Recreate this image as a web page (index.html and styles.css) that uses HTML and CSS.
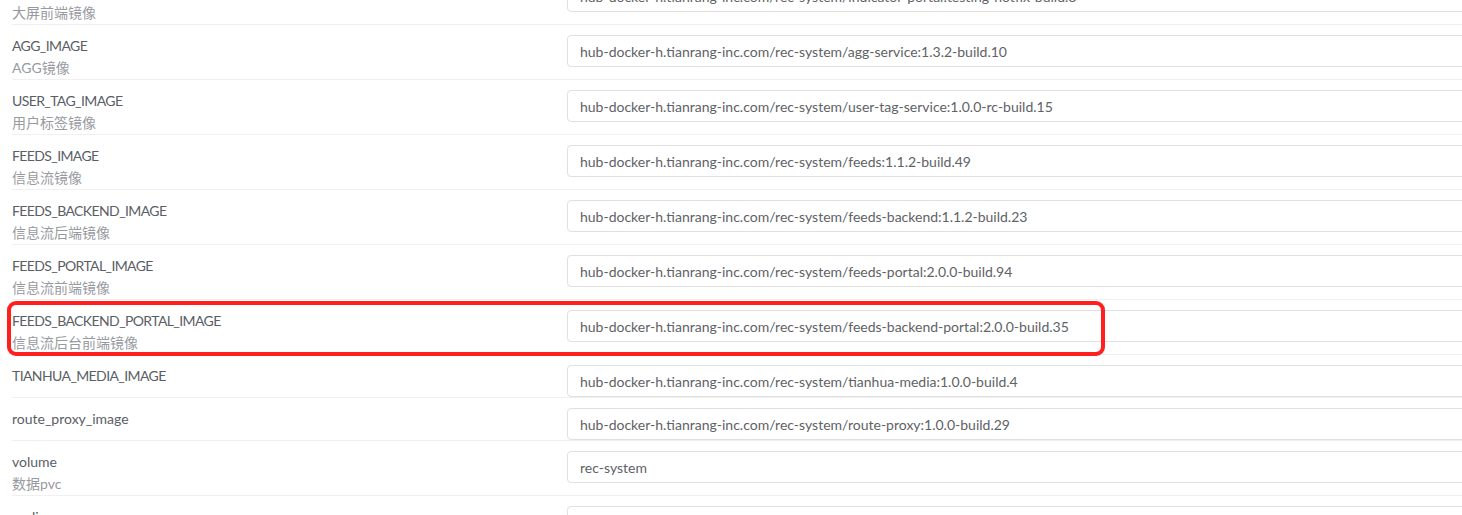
FILE: index.html
```html
<!DOCTYPE html>
<html lang="zh-CN">
<head>
<meta charset="utf-8">
<title>镜像配置</title>
<link rel="stylesheet" href="styles.css">
</head>
<body>
<div class="form">
  <div class="row">
    <div class="label"><div class="name caps">INDICATOR_PORTAL_IMAGE</div><div class="desc">大屏前端镜像</div></div>
    <div class="field"><input class="input" type="text" value="hub-docker-h.tianrang-inc.com/rec-system/indicator-portal:testing-hotfix-build.8"></div>
  </div>
  <div class="row">
    <div class="label"><div class="name caps">AGG_IMAGE</div><div class="desc">AGG镜像</div></div>
    <div class="field"><input class="input" type="text" value="hub-docker-h.tianrang-inc.com/rec-system/agg-service:1.3.2-build.10"></div>
  </div>
  <div class="row">
    <div class="label"><div class="name caps">USER_TAG_IMAGE</div><div class="desc">用户标签镜像</div></div>
    <div class="field"><input class="input" type="text" value="hub-docker-h.tianrang-inc.com/rec-system/user-tag-service:1.0.0-rc-build.15"></div>
  </div>
  <div class="row">
    <div class="label"><div class="name caps">FEEDS_IMAGE</div><div class="desc">信息流镜像</div></div>
    <div class="field"><input class="input" type="text" value="hub-docker-h.tianrang-inc.com/rec-system/feeds:1.1.2-build.49"></div>
  </div>
  <div class="row">
    <div class="label"><div class="name caps">FEEDS_BACKEND_IMAGE</div><div class="desc">信息流后端镜像</div></div>
    <div class="field"><input class="input" type="text" value="hub-docker-h.tianrang-inc.com/rec-system/feeds-backend:1.1.2-build.23"></div>
  </div>
  <div class="row">
    <div class="label"><div class="name caps">FEEDS_PORTAL_IMAGE</div><div class="desc">信息流前端镜像</div></div>
    <div class="field"><input class="input" type="text" value="hub-docker-h.tianrang-inc.com/rec-system/feeds-portal:2.0.0-build.94"></div>
  </div>
  <div class="row highlighted">
    <div class="label"><div class="name caps">FEEDS_BACKEND_PORTAL_IMAGE</div><div class="desc">信息流后台前端镜像</div></div>
    <div class="field"><input class="input" type="text" value="hub-docker-h.tianrang-inc.com/rec-system/feeds-backend-portal:2.0.0-build.35"></div>
    <div class="mark"></div>
  </div>
  <div class="row">
    <div class="label"><div class="name caps">TIANHUA_MEDIA_IMAGE</div></div>
    <div class="field"><input class="input" type="text" value="hub-docker-h.tianrang-inc.com/rec-system/tianhua-media:1.0.0-build.4"></div>
  </div>
  <div class="row">
    <div class="label"><div class="name">route_proxy_image</div></div>
    <div class="field"><input class="input" type="text" value="hub-docker-h.tianrang-inc.com/rec-system/route-proxy:1.0.0-build.29"></div>
  </div>
  <div class="row">
    <div class="label"><div class="name">volume</div><div class="desc">数据pvc</div></div>
    <div class="field"><input class="input" type="text" value="rec-system"></div>
  </div>
  <div class="row">
    <div class="label"><div class="name">replicas</div><div class="desc">副本数</div></div>
    <div class="field"><input class="input" type="text" value="1"></div>
  </div>
</div>
</body>
</html>
```
FILE: styles.css
```css
html, body {
  margin: 0;
  padding: 0;
  background: #fff;
  overflow: hidden;
}
body {
  font-family: Lato, "Noto Sans CJK SC", sans-serif;
  font-size: 14px;
  color: #606266;
}
.form {
  margin-top: -30px;
  padding-left: 12px;
  width: 1700px;
}
.row {
  position: relative;
  display: flex;
  align-items: flex-start;
  padding-top: 10px;
  border-bottom: 1px solid #f0f0f0;
}
.label {
  width: 555px;
  flex: none;
  line-height: 22px;
}
.name {
  color: #5a5e66;
}
.caps {
  letter-spacing: -0.6px;
}
.desc {
  color: #979aa0;
}
.field {
  flex: 1;
  display: flex;
}
.input {
  flex: 1;
  height: 32px;
  box-sizing: border-box;
  border: 1px solid #e0e0e0;
  border-radius: 4px;
  padding: 0 12px;
  font-family: Lato, "Noto Sans CJK SC", sans-serif;
  font-size: 14px;
  color: #606266;
  background: #fff;
  outline: none;
}
.mark {
  position: absolute;
  left: -5px;
  top: 1px;
  width: 1098px;
  height: 55px;
  box-sizing: border-box;
  border: 4px solid #ff1f1f;
  border-radius: 9px;
  pointer-events: none;
}
```
